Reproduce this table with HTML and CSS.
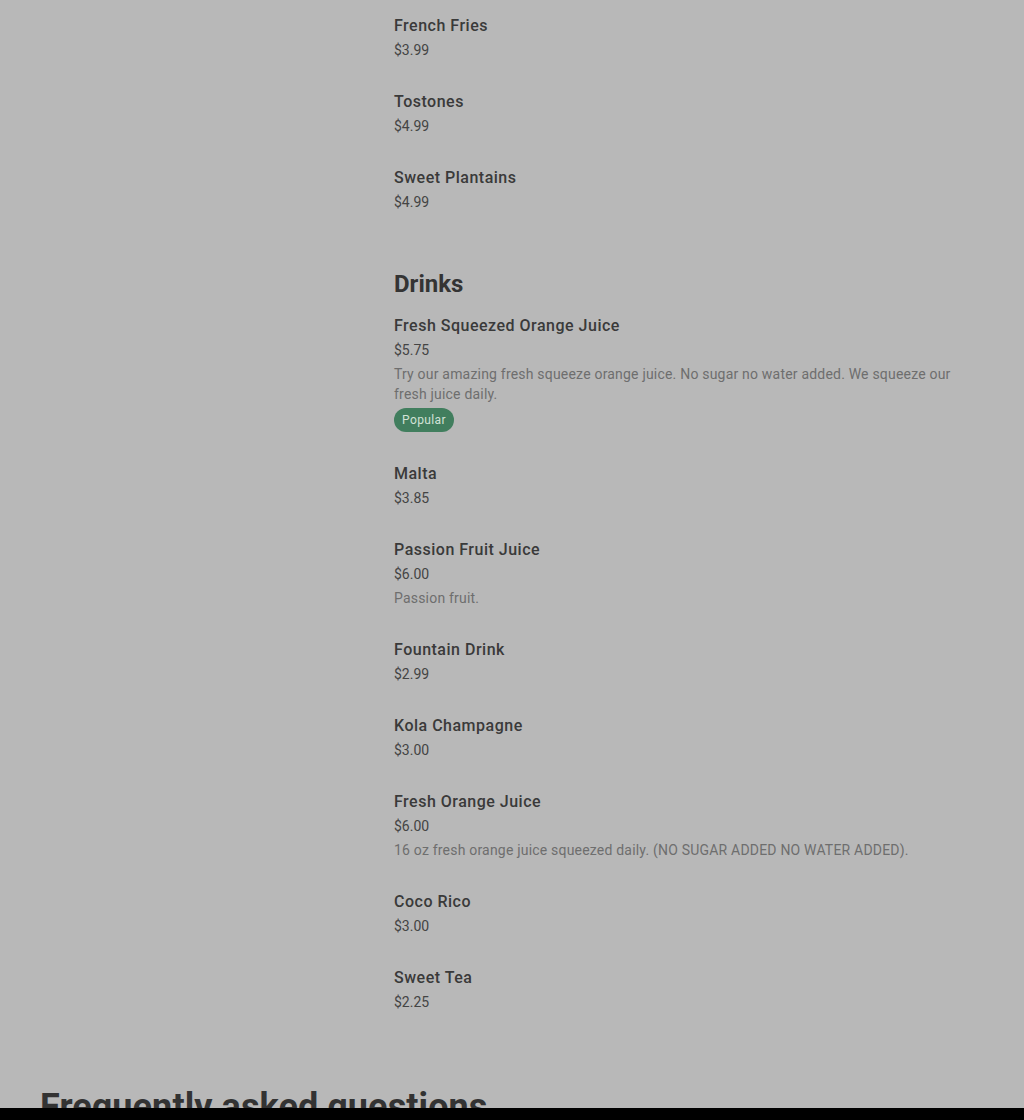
FILE: index.html
```html
<!DOCTYPE html>
<html lang="en">
<head>
    <meta charset="UTF-8">
    <meta name="viewport" content="width=device-width, initial-scale=1.0">
    <title>Menu</title>
    <link rel="stylesheet" href="styles.css">
</head>
<body>
    <div class="page">
        <div class="menu-layout">
            <aside class="menu-nav"></aside>

            <main class="menu-list">
                <section class="menu-section">
                    <ul class="items">
                        <li class="item">
                            <div class="item-title">French Fries</div>
                            <div class="item-price">$3.99</div>
                        </li>
                        <li class="item">
                            <div class="item-title">Tostones</div>
                            <div class="item-price">$4.99</div>
                        </li>
                        <li class="item">
                            <div class="item-title">Sweet Plantains</div>
                            <div class="item-price">$4.99</div>
                        </li>
                    </ul>
                </section>

                <section class="menu-section">
                    <h2 class="section-title">Drinks</h2>
                    <ul class="items">
                        <li class="item">
                            <div class="item-title">Fresh Squeezed Orange Juice</div>
                            <div class="item-price">$5.75</div>
                            <div class="item-desc">Try our amazing fresh squeeze orange juice. No sugar no water added. We squeeze our fresh juice daily.</div>
                            <span class="badge">Popular</span>
                        </li>
                        <li class="item">
                            <div class="item-title">Malta</div>
                            <div class="item-price">$3.85</div>
                        </li>
                        <li class="item">
                            <div class="item-title">Passion Fruit Juice</div>
                            <div class="item-price">$6.00</div>
                            <div class="item-desc">Passion fruit.</div>
                        </li>
                        <li class="item">
                            <div class="item-title">Fountain Drink</div>
                            <div class="item-price">$2.99</div>
                        </li>
                        <li class="item">
                            <div class="item-title">Kola Champagne</div>
                            <div class="item-price">$3.00</div>
                        </li>
                        <li class="item">
                            <div class="item-title">Fresh Orange Juice</div>
                            <div class="item-price">$6.00</div>
                            <div class="item-desc">16 oz fresh orange juice squeezed daily. (NO SUGAR ADDED NO WATER ADDED).</div>
                        </li>
                        <li class="item">
                            <div class="item-title">Coco Rico</div>
                            <div class="item-price">$3.00</div>
                        </li>
                        <li class="item">
                            <div class="item-title">Sweet Tea</div>
                            <div class="item-price">$2.25</div>
                        </li>
                    </ul>
                </section>
            </main>
        </div>

        <section class="faq">
            <h2 class="faq-title">Frequently asked questions</h2>
        </section>
    </div>

    <div class="bottom-bar"></div>
</body>
</html>
```

FILE: styles.css
```css
:root {
    --backdrop: #b8b8b8;
    --title: #3a3a3a;
    --price: #444444;
    --desc: #6e6e6e;
    --badge-bg: #417e5e;
    --badge-text: #d2e2d7;
}

body {
    margin: 0;
    background: var(--backdrop);
    font-family: Roboto, "Liberation Sans", sans-serif;
    color: var(--title);
    overflow: hidden;
}

.page {
    padding: 0 40px;
}

.menu-layout {
    display: grid;
    grid-template-columns: 330px 1fr;
    gap: 24px;
}

.menu-section + .menu-section {
    margin-top: 40px;
}

.section-title {
    margin: 0;
    font-size: 24px;
    line-height: 32px;
    font-weight: 700;
    color: #343434;
}

.items {
    list-style: none;
    margin: 0;
    padding: 0;
}

.item {
    padding: 14px 0 16px;
}

.item-title {
    font-size: 16px;
    line-height: 24px;
    font-weight: 500;
    letter-spacing: 0.5px;
    color: var(--title);
}

.item-price {
    margin-top: 2px;
    font-size: 14px;
    line-height: 20px;
    color: var(--price);
}

.item-desc {
    margin-top: 4px;
    font-size: 14px;
    line-height: 20px;
    letter-spacing: 0.2px;
    color: var(--desc);
}

.badge {
    display: inline-block;
    margin-top: 4px;
    padding: 0 8px;
    height: 24px;
    line-height: 24px;
    border-radius: 12px;
    background: var(--badge-bg);
    color: var(--badge-text);
    font-size: 12px;
    letter-spacing: 0.4px;
}

.faq {
    padding-top: 57px;
}

.faq-title {
    margin: 0;
    font-size: 36px;
    line-height: 44px;
    font-weight: 700;
    letter-spacing: 0.1px;
    color: #333333;
}

.bottom-bar {
    position: fixed;
    left: 0;
    right: 0;
    bottom: 0;
    height: 12px;
    background: #000000;
}
```
